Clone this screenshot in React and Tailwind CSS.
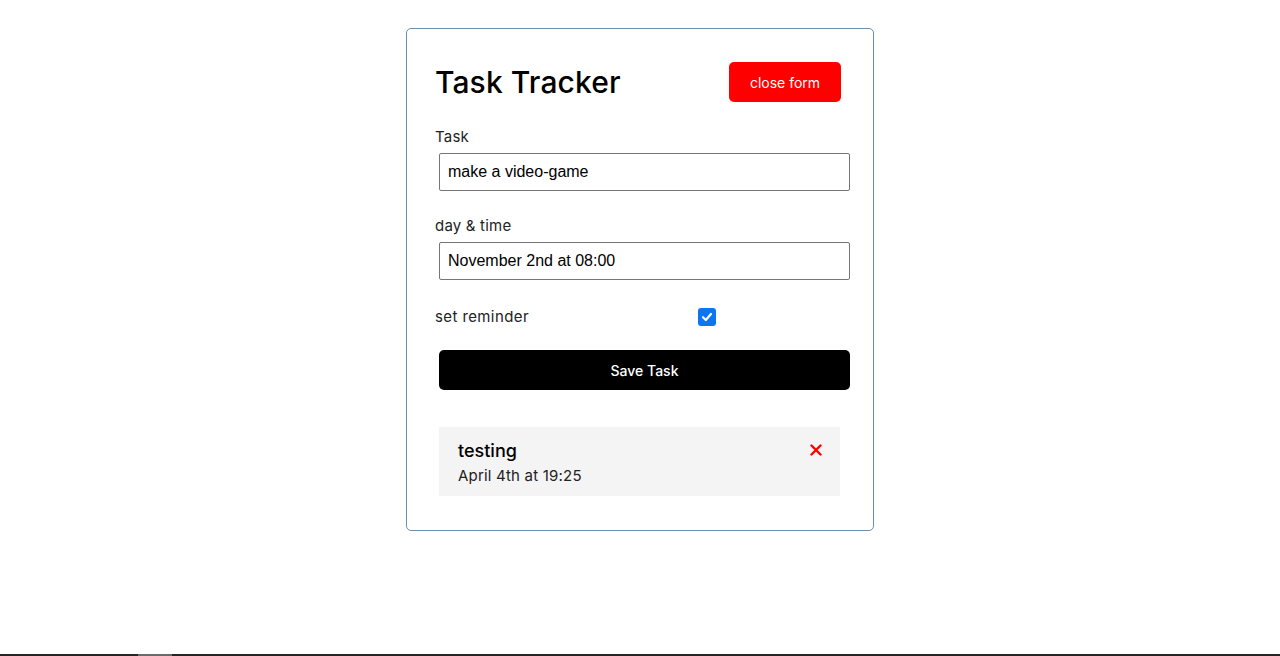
import React from "react";

export default function App() {
  const font = { fontFamily: 'Inter, "Noto Sans", sans-serif' };
  return (
    <div className="min-h-[656px] flex flex-col bg-white" style={font}>
      <div className="flex-1 pt-[28px]">
        <div className="mx-auto w-[468px] border border-[#6b8fb3] rounded-[5px] px-[28px] pt-[33px] pb-[34px]">
          <header className="flex items-center justify-between h-[40px] mb-[24px]">
            <h1 className="text-[30px] font-medium text-black tracking-[0.1px] leading-none">Task Tracker</h1>
            <button className="w-[112px] h-[40px] mr-[4px] bg-[#ff0000] text-white text-[14px] rounded-[5px]">close form</button>
          </header>
          <form>
            <div className="flex flex-col">
              <label className="h-[22px] leading-[22px] text-[15px] text-[#222] tracking-[0.2px]">Task</label>
              <input
                readOnly
                value="make a video-game"
                className="mt-[5px] ml-[4px] w-[411px] h-[38px] border border-[#767676] rounded-[2px] px-[8px] text-[16px] text-black outline-none"
                style={{ fontFamily: '"Liberation Sans", Arial, sans-serif' }}
              />
            </div>
            <div className="flex flex-col mt-[24px]">
              <label className="h-[22px] leading-[22px] text-[15px] text-[#222] tracking-[0.2px]">day &amp; time</label>
              <input
                readOnly
                value="November 2nd at 08:00"
                className="mt-[5px] ml-[4px] w-[411px] h-[38px] border border-[#767676] rounded-[2px] px-[8px] text-[16px] text-black outline-none"
                style={{ fontFamily: '"Liberation Sans", Arial, sans-serif' }}
              />
            </div>
            <div className="flex items-center mt-[26px] h-[22px]">
              <label className="w-[263px] text-[15px] text-[#222] tracking-[0.4px] pt-[1px]">set reminder</label>
              <span className="w-[18px] h-[18px] rounded-[3px] bg-[#0b76ef] flex items-center justify-center">
                <svg width="12" height="12" viewBox="0 0 12 12">
                  <path d="M2 6.2 L4.8 9 L10 3" fill="none" stroke="white" strokeWidth="2.2" strokeLinecap="round" strokeLinejoin="round" />
                </svg>
              </span>
            </div>
            <button
              type="button"
              className="mt-[22px] ml-[4px] w-[411px] h-[40px] bg-black text-white text-[14px] font-medium rounded-[5px]"
            >
              Save Task
            </button>
          </form>
          <div className="mt-[37px] ml-[4px] w-[401px] h-[69px] bg-[#f4f4f4] pl-[19px] pr-[18px] pt-[12px] flex justify-between">
            <div>
              <h3 className="text-[18px] font-medium text-black leading-[24px]">testing</h3>
              <p className="text-[15px] text-[#222] leading-[24px] mt-[1px] tracking-[0.2px]">April 4th at 19:25</p>
            </div>
            <svg width="12" height="12" viewBox="0 0 12 12" className="mt-[5px]">
              <path d="M1.5 1.5 L10.5 10.5 M10.5 1.5 L1.5 10.5" stroke="#ff0000" strokeWidth="2.4" strokeLinecap="round" />
            </svg>
          </div>
        </div>
      </div>
      <div className="h-[2px] flex bg-[#262626]">
        <div className="ml-[138px] w-[34px] h-[2px] bg-[#6a6a6a]" />
      </div>
    </div>
  );
}
